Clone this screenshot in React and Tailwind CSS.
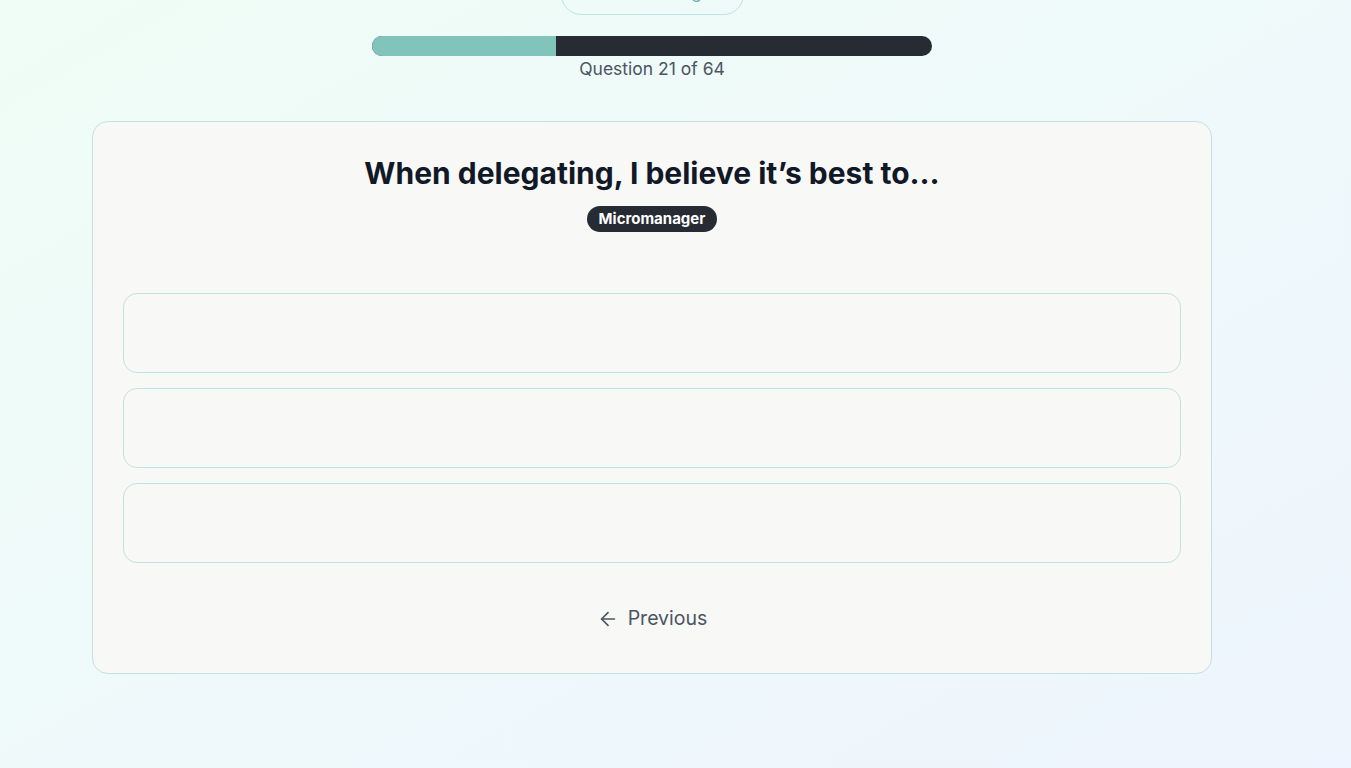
import React from 'react';
import { ArrowLeft } from 'lucide-react';

export default function App() {
  const current = 21;
  const total = 64;
  const pct = (current / total) * 100;

  return (
    <div
      className="min-h-screen w-full bg-gradient-to-br from-[#effdf6] to-[#eef5fe] overflow-hidden"
      style={{ fontFamily: 'Inter, "Noto Sans", sans-serif' }}
    >
      <div className="w-[1120px] ml-[92px] flex flex-col items-center">
        {/* top button, mostly scrolled out of view */}
        <button className="-mt-[26px] h-[41px] w-[183px] rounded-full border border-[#bfe3de] text-[#6fb7ae] text-[17px] leading-[20px] pb-[5px]">
          View Rankings
        </button>

        <div className="mt-[21px] w-[560px] h-5 rounded-full bg-[#272b33] overflow-hidden">
          <div className="h-full bg-[#80c4bc]" style={{ width: `${pct}%` }} />
        </div>
        <p className="mt-px text-[17.5px] leading-[24px] text-[#4b5563]">
          Question {current} of {total}
        </p>

        <section className="mt-[40px] w-full rounded-2xl border border-[#bfe3de] bg-[#f8f8f6] px-[30px] pt-[33px] pb-[39px]">
          <h2 className="text-center text-[30px] leading-[36px] font-bold text-[#111827]">
            When delegating, I believe it’s best to…
          </h2>
          <div className="mt-[15px] flex justify-center">
            <span className="rounded-full bg-[#272b33] px-3 h-[26px] flex items-center text-[15px] font-bold text-white">
              Micromanager
            </span>
          </div>

          <div className="mt-[61px] flex flex-col gap-[15px]">
            {[0, 1, 2].map((i) => (
              <button
                key={i}
                className="h-[80px] w-full rounded-[14px] border border-[#bfe3de] bg-[#f8f8f6]"
              />
            ))}
          </div>

          <div className="mt-[41px] flex justify-center">
            <button className="flex items-center gap-[9px] text-[19.5px] text-[#4b5563] h-[30px]">
              <ArrowLeft size={22} strokeWidth={1.8} />
              Previous
            </button>
          </div>
        </section>
      </div>
    </div>
  );
}
